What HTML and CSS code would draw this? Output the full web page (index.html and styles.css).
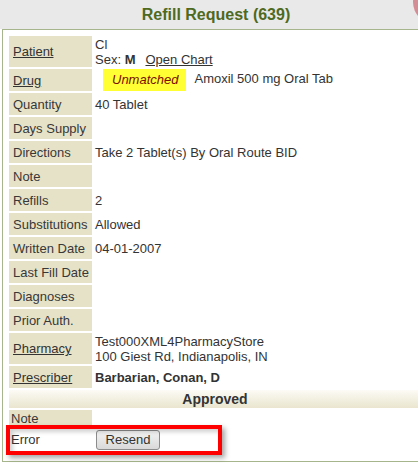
FILE: index.html
```html
<!DOCTYPE html>
<html>
<head>
<meta charset="utf-8">
<link rel="stylesheet" href="styles.css">
</head>
<body>
<div class="viewport">
  <div class="frame">
    <div class="titlebar">Refill Request (639)</div>
    <span class="close-blob"></span>
    <div class="panel">
      <table class="grid">
        <colgroup><col class="c-label"><col></colgroup>
        <tr class="tall">
          <td class="label"><a href="#">Patient</a></td>
          <td class="value">Cl<br>Sex: <b>M</b><a class="chart-link" href="#">Open Chart</a></td>
        </tr>
        <tr>
          <td class="label"><a href="#">Drug</a></td>
          <td class="value"><span class="badge">Unmatched</span>Amoxil 500 mg Oral Tab</td>
        </tr>
        <tr><td class="label">Quantity</td><td class="value">40 Tablet</td></tr>
        <tr><td class="label">Days Supply</td><td class="value"></td></tr>
        <tr><td class="label">Directions</td><td class="value">Take 2 Tablet(s) By Oral Route BID</td></tr>
        <tr><td class="label">Note</td><td class="value"></td></tr>
        <tr><td class="label">Refills</td><td class="value">2</td></tr>
        <tr><td class="label">Substitutions</td><td class="value">Allowed</td></tr>
        <tr><td class="label">Written Date</td><td class="value">04-01-2007</td></tr>
        <tr><td class="label">Last Fill Date</td><td class="value"></td></tr>
        <tr><td class="label">Diagnoses</td><td class="value"></td></tr>
        <tr><td class="label">Prior Auth.</td><td class="value"></td></tr>
        <tr class="tall">
          <td class="label"><a href="#">Pharmacy</a></td>
          <td class="value">Test000XML4PharmacyStore<br>100 Giest Rd, Indianapolis, IN</td>
        </tr>
        <tr>
          <td class="label"><a href="#">Prescriber</a></td>
          <td class="value strong">Barbarian, Conan, D</td>
        </tr>
        <tr class="section"><td colspan="2">Approved</td></tr>
        <tr class="short">
          <td class="label slim">Note</td>
          <td class="value"></td>
        </tr>
        <tr>
          <td class="plain slim">Error</td>
          <td class="value"><button class="btn" type="button">Resend</button></td>
        </tr>
      </table>
    </div>
    <div class="highlight"></div>
  </div>
</div>
</body>
</html>
```

FILE: styles.css
```css
html, body {
  margin: 0;
  padding: 0;
  background: #ffffff;
}

body {
  font-family: "Liberation Sans", Arial, sans-serif;
  font-size: 13px;
  color: #333333;
}

.viewport {
  width: 418px;
  height: 463px;
  overflow: hidden;
  position: relative;
}

.frame {
  width: 432px;
  position: relative;
}

.titlebar {
  height: 29px;
  line-height: 29px;
  background: #e9e9e9;
  text-align: center;
  font-weight: bold;
  font-size: 16px;
  color: #4e6a1f;
}

.close-blob {
  position: absolute;
  left: 413px;
  top: -20px;
  width: 44px;
  height: 44px;
  border-radius: 50%;
  background: #d58d95;
}

.panel {
  box-sizing: border-box;
  margin-left: 2px;
  height: 433px;
  border: 1px solid #a7b58c;
  padding: 4px 4px 0 4px;
  background: #ffffff;
}

.grid {
  width: 416px;
  border-collapse: separate;
  border-spacing: 2px;
  table-layout: fixed;
}

.c-label {
  width: 83px;
}

.grid td {
  height: 22px;
  padding: 0;
  line-height: 15px;
  vertical-align: middle;
  white-space: nowrap;
}

.grid tr.tall td {
  height: 31px;
}

.grid tr.short td {
  height: 16px;
}

.label {
  background: #e6e2c7;
  padding-left: 4px !important;
  color: #383838;
}

.label.slim,
.plain.slim {
  padding-left: 2px !important;
}

.label a,
.value a {
  color: #333333;
  text-decoration: underline;
}

.chart-link {
  margin-left: 10px;
}

.value {
  padding-left: 1px !important;
}

.value b {
  font-weight: bold;
}

.strong {
  font-weight: bold;
}

.badge {
  display: inline-block;
  height: 22px;
  line-height: 22px;
  vertical-align: middle;
  margin: 0 8px 0 8px;
  padding: 0 8px 0 9px;
  background: #ffff33;
  color: #7a0d00;
  font-style: italic;
}

.section td {
  height: 18px;
  text-align: center;
  font-weight: bold;
  font-size: 14px;
  color: #333333;
  background: linear-gradient(#fcfbf5, #e9e5ce);
}

.btn {
  box-sizing: border-box;
  width: 64px;
  height: 20px;
  margin: 1px 0 0 1px;
  padding: 0;
  font-family: "Liberation Sans", Arial, sans-serif;
  font-size: 13px;
  color: #333333;
  border: 1px solid #8c8c8c;
  border-radius: 3px;
  background: linear-gradient(#f4f4f4, #d9d9d9);
}

.highlight {
  position: absolute;
  left: 6px;
  top: 425px;
  width: 216px;
  height: 30px;
  box-sizing: border-box;
  border: 4px solid #ff0000;
  box-shadow: 3px 3px 5px rgba(0, 0, 0, 0.35), inset 3px 3px 4px rgba(0, 0, 0, 0.18);
}
```
